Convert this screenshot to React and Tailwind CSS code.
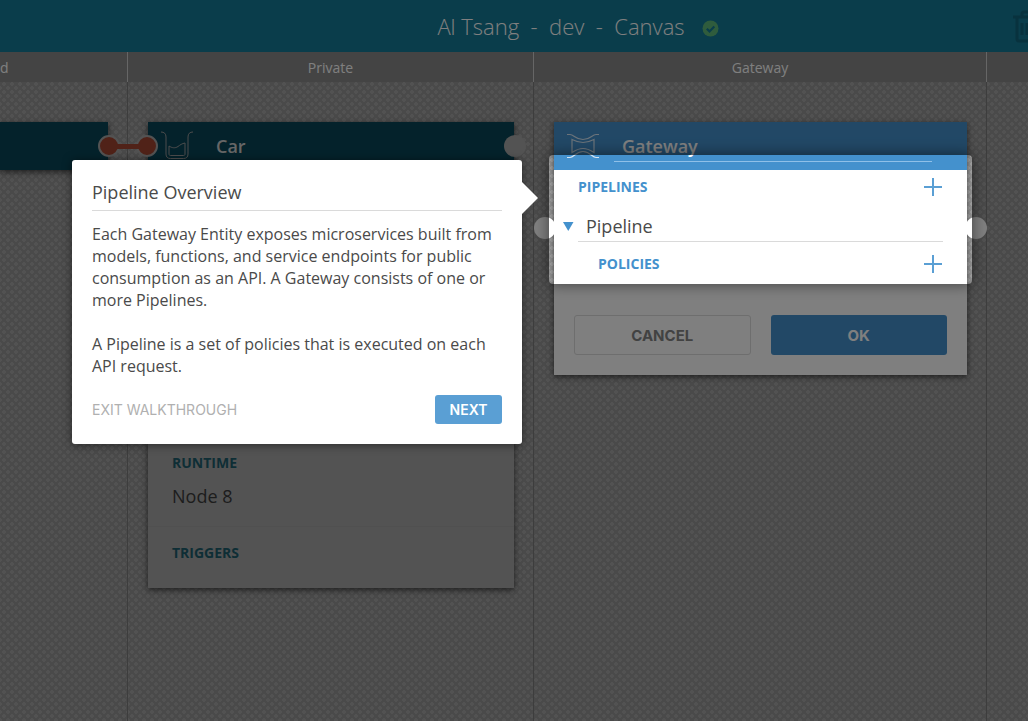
import React from "react";

const pattern =
  "bg-[#a4a4a4] bg-[size:8px_8px] bg-[image:linear-gradient(45deg,#949494_12%,transparent_12%,transparent_38%,#949494_38%,#949494_62%,transparent_62%,transparent_88%,#949494_88%),linear-gradient(-45deg,#949494_12%,transparent_12%,transparent_38%,#949494_38%,#949494_62%,transparent_62%,transparent_88%,#949494_88%)]";

function Plus({ label }) {
  return (
    <button type="button" aria-label={label} className="flex h-5 w-5 items-center justify-center text-[#5a9fd4]">
      <svg width="20" height="20" viewBox="0 0 20 20" fill="none" stroke="currentColor" strokeWidth="2">
        <path d="M10 1v18M1 10h18" />
      </svg>
    </button>
  );
}

function BeakerIcon() {
  return (
    <svg width="32" height="30" viewBox="0 0 32 30" fill="none" stroke="#9a9a9a" strokeWidth="1">
      <path d="M0 1c3 0 5 1.500 5 5v17c0 3 1.500 4.500 4.500 4.500h13c3 0 4.500-1.500 4.500-4.500V6c0-3.500 2-5 5-5" />
      <path d="M8 15v8c0 1 .5 1.500 1.500 1.500h13c1 0 1.500-.5 1.500-1.500V12c-3 .5-5 2-7 3.500-3 2-6 1.500-9-.500z" />
    </svg>
  );
}

function GatewayIcon() {
  return (
    <svg width="32" height="26" viewBox="0 0 32 26" fill="none" stroke="#d6e6f4" strokeWidth="1.200">
      <path d="M0 1.500h3c4 0 5.500 5 13 5s9-5 13-5h3" />
      <path d="M0 24.500h3c4 0 5.500-6 13-6s9 6 13 6h3" />
      <path d="M5 6.500c4 2 6 3 11 3s7-1 11-3v13c-4-2.500-6-4-11-4s-7 1.500-11 4z" />
    </svg>
  );
}

function Connector() {
  return (
    <svg className="absolute -left-[50px] top-[13px]" width="60" height="22" viewBox="0 0 60 22">
      <circle cx="11" cy="11" r="10" fill="#a04430" stroke="#a6a6a6" strokeWidth="2" />
      <circle cx="49" cy="11" r="10" fill="#a04430" stroke="#a6a6a6" strokeWidth="2" />
      <path d="M11 11.500h38" stroke="#a04430" strokeWidth="5" />
    </svg>
  );
}

function CarCard() {
  return (
    <section className="relative bg-[#a6a6a6] shadow-[0_2px_6px_rgba(0,0,0,0.6)]">
      <header className="flex h-12 items-center gap-[23px] bg-[#084456] pl-[13px]">
        <BeakerIcon />
        <h2 className="text-lg font-semibold text-[#ccc]">Car</h2>
      </header>
      <div className="px-6 pt-[283px] pb-4">
        <h3 className="text-sm font-bold text-[#1c5c6b]">RUNTIME</h3>
        <p className="pt-[9px] text-lg text-[#3a3a3a]">Node 8</p>
      </div>
      <div className="border-t border-[#a0a0a0] px-6 pt-4 pb-[25px]">
        <h3 className="text-sm font-bold text-[#1c5c6b]">TRIGGERS</h3>
      </div>
      <Connector />
      <span className="absolute -right-3 top-[13px] size-[22px] rounded-full bg-[#a6a6a6]" />
    </section>
  );
}

function Walkthrough() {
  return (
    <div
      role="dialog"
      aria-labelledby="walkthrough-title"
      className="absolute right-full top-[38px] z-20 mr-8 w-[450px] rounded-[3px] bg-white p-5 text-[#4a4a4a] shadow-[0_1px_10px_rgba(0,0,0,0.5)]"
    >
      <svg className="absolute left-full top-[22px]" width="16" height="32" viewBox="0 0 16 32" fill="#fff">
        <path d="M0 0l16 16L0 32z" />
      </svg>
      <h2 id="walkthrough-title" className="border-b border-[#dadada] pb-1.5 text-lg leading-6">
        Pipeline Overview
      </h2>
      <p className="pt-3 text-base leading-[22px]">
        Each Gateway Entity exposes microservices built from models, functions, and service endpoints for public
        consumption as an API. A Gateway consists of one or more Pipelines.
      </p>
      <p className="pt-[22px] text-base leading-[22px]">
        A Pipeline is a set of policies that is executed on each API request.
      </p>
      <div className="flex items-center justify-between pt-[18px] font-['Inter',sans-serif] text-sm">
        <button type="button" className="text-[#b0b0b0]">
          EXIT WALKTHROUGH
        </button>
        <button type="button" className="h-[29px] w-[67px] rounded-[3px] bg-[#5a9fd4] font-semibold text-white">
          NEXT
        </button>
      </div>
    </div>
  );
}

function GatewayCard() {
  return (
    <section className="relative bg-white shadow-[0_2px_6px_rgba(0,0,0,0.6)]">
      <header className="flex h-12 items-center gap-[15px] bg-[#4491cd] pl-[13px] pr-[35px]">
        <GatewayIcon />
        <input
          aria-label="Gateway name"
          defaultValue="Gateway"
          className="h-8 min-w-0 flex-1 border-b border-[#8fc0e8] bg-transparent px-2 text-lg font-semibold text-white outline-none"
        />
      </header>
      <div className="pl-6 pr-6 pt-[7px]">
        <div className="flex h-5 items-center justify-between">
          <h3 className="text-sm font-bold text-[#4491cd]">PIPELINES</h3>
          <Plus label="Add pipeline" />
        </div>
        <div className="relative mt-4 h-[29px] border-b border-[#dadada] pl-2">
          <button type="button" aria-label="Collapse pipeline" className="absolute -left-4 top-[9px]">
            <svg className="block" width="12" height="9" viewBox="0 0 12 9" fill="#4491cd">
              <path d="M1 0h10.500L6.250 9z" />
            </svg>
          </button>
          <p className="text-lg leading-[26px] text-[#4a4a4a]">Pipeline</p>
        </div>
        <div className="mt-3 flex h-5 items-center justify-between pl-5">
          <h3 className="text-sm font-bold text-[#4491cd]">POLICIES</h3>
          <Plus label="Add policy" />
        </div>
      </div>
      <div className="grid grid-cols-2 gap-5 px-5 pb-5 pt-[41px] font-['Inter',sans-serif] text-[15px] font-bold">
        <button type="button" className="h-10 rounded-[3px] border border-[#dcdcdc] pt-0.5 text-[#858585]">
          CANCEL
        </button>
        <button type="button" className="h-10 rounded-[3px] bg-[#4491cd] pt-0.5 text-white">
          OK
        </button>
      </div>
      <span className="absolute -left-5 top-[95px] size-[22px] rounded-full bg-white" />
      <span className="absolute -right-5 top-[95px] size-[22px] rounded-full bg-white" />
      <div className="pointer-events-none absolute -inset-x-[5px] top-[33px] z-10 h-[129px] rounded-[4px] shadow-[0_0_0_9999px_rgba(0,0,0,0.5),0_0_15px_rgba(0,0,0,0.5)]" />
      <Walkthrough />
    </section>
  );
}

function Column({ title, first, align = "text-center", children }) {
  return (
    <div className="flex min-w-0 flex-col">
      <div
        className={`h-[30px] bg-[#888] text-sm leading-[32px] text-white ${align} ${first ? "" : "border-l border-[#ccc]"}`}
      >
        {title}
      </div>
      <div className={`flex-1 pr-[19px] pt-10 ${first ? "" : "border-l border-[#7a7a7a] pl-5"}`}>{children}</div>
    </div>
  );
}

export default function App() {
  return (
    <div className="flex min-h-screen flex-col overflow-hidden font-['Open_Sans',sans-serif]">
      <header className="flex h-[52px] items-center bg-[#147a96]">
        <div className="flex flex-1 items-center justify-center gap-[17px] pl-[143px]">
          <h1 className="whitespace-pre text-[22px] leading-8 font-light text-white">Al Tsang  -  dev  -  Canvas</h1>
          <svg className="mt-1" width="17" height="17" viewBox="0 0 17 17">
            <circle cx="8.500" cy="8.500" r="8" fill="#5fb87a" />
            <path d="M4.800 8.700l2.700 2.700 4.800-5" fill="none" stroke="#147a96" strokeWidth="2.200" />
          </svg>
        </div>
        <button type="button" aria-label="Delete" className="w-[15px] shrink-0 text-[#10647c]">
          <svg width="30" height="34" viewBox="0 0 30 34" fill="none" stroke="currentColor" strokeWidth="3">
            <path d="M0 8h27M4 8v22a2 2 0 0 0 2 2h15a2 2 0 0 0 2-2V8M9 8V5a2 2 0 0 1 2-2h5a2 2 0 0 1 2 2v3M9 14v12M14 14v12M19 14v12" />
          </svg>
        </button>
      </header>
      <main className={`grid flex-1 grid-cols-[127px_406fr_453fr_42fr] ${pattern}`}>
        <Column first align="pl-0" title="d">
          <div className="h-12 bg-[#084456] shadow-[0_2px_6px_rgba(0,0,0,0.6)]" />
        </Column>
        <Column title="Private">
          <CarCard />
        </Column>
        <Column title="Gateway">
          <GatewayCard />
        </Column>
        <Column title="" />
      </main>
    </div>
  );
}
